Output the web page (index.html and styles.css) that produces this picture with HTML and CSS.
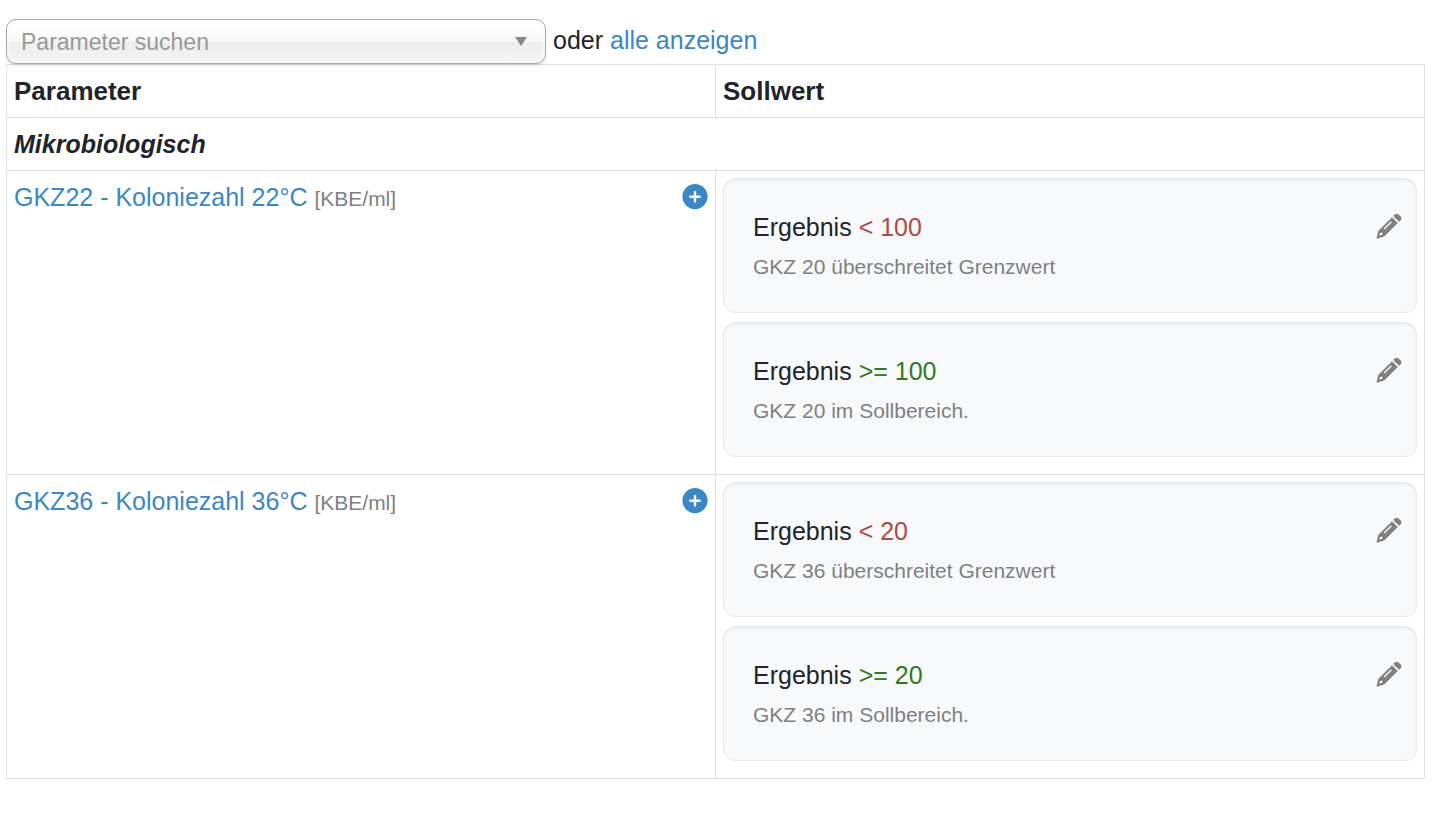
FILE: index.html
```
<!DOCTYPE html>
<html lang="de">
<head>
    <meta charset="UTF-8">
    <meta name="viewport" content="width=device-width, initial-scale=1.0">
    <title>Parameter</title>
    <link rel="stylesheet" href="styles.css">
</head>
<body>
    <svg class="icon-defs" aria-hidden="true">
        <symbol id="icon-plus" viewBox="0 0 26 26">
            <circle cx="13" cy="12.6" r="12.6" fill="currentColor"/>
            <path d="M13 8v9.4M8.3 12.7h9.4" stroke="#fff" stroke-width="2.4" stroke-linecap="round"/>
        </symbol>
        <symbol id="icon-pencil" viewBox="0 0 26 26">
            <path fill="currentColor" fill-rule="evenodd" d="M16 4.2L21.8 10 8.2 23.5 1.6 25.6Q.4 25.9.6 24.6L2.4 17.8zM14.9 8.3L7.6 15.6l1 1 7.3-7.3zM4.3 19.6l-.9 3 3.1-.9-.3-1.8z"/>
            <path fill="currentColor" d="M17.2 3l1.6-1.6q1.8-1.5 3.6 0l2.2 2.2q1.5 1.8 0 3.6L23 8.8z"/>
        </symbol>
    </svg>

    <div class="toolbar">
        <div class="select-wrap">
            <select id="parameterSelect" aria-label="Parameter suchen">
                <option>Parameter suchen</option>
                <option>GKZ22 - Koloniezahl 22°C</option>
                <option>GKZ36 - Koloniezahl 36°C</option>
            </select>
            <span class="arrow"></span>
        </div>
        <span>oder <a href="#alle">alle anzeigen</a></span>
    </div>

    <table class="parameters">
        <thead>
            <tr>
                <th>Parameter</th>
                <th>Sollwert</th>
            </tr>
        </thead>
        <tbody>
            <tr>
                <th class="group" colspan="2">Mikrobiologisch</th>
            </tr>
            <tr>
                <td>
                    <div class="parameter">
                        <span><a href="#gkz22">GKZ22 - Koloniezahl 22°C</a> <small>[KBE/ml]</small></span>
                        <button type="button" class="add" aria-label="Sollwert hinzufügen"><svg><use href="#icon-plus"/></svg></button>
                    </div>
                </td>
                <td>
                    <div class="well">
                        <div>
                            <div>Ergebnis <span class="bad">&lt; 100</span></div>
                            <small>GKZ 20 überschreitet Grenzwert</small>
                        </div>
                        <button type="button" class="edit" aria-label="Bearbeiten"><svg><use href="#icon-pencil"/></svg></button>
                    </div>
                    <div class="well">
                        <div>
                            <div>Ergebnis <span class="good">&gt;= 100</span></div>
                            <small>GKZ 20 im Sollbereich.</small>
                        </div>
                        <button type="button" class="edit" aria-label="Bearbeiten"><svg><use href="#icon-pencil"/></svg></button>
                    </div>
                </td>
            </tr>
            <tr>
                <td>
                    <div class="parameter">
                        <span><a href="#gkz36">GKZ36 - Koloniezahl 36°C</a> <small>[KBE/ml]</small></span>
                        <button type="button" class="add" aria-label="Sollwert hinzufügen"><svg><use href="#icon-plus"/></svg></button>
                    </div>
                </td>
                <td>
                    <div class="well">
                        <div>
                            <div>Ergebnis <span class="bad">&lt; 20</span></div>
                            <small>GKZ 36 überschreitet Grenzwert</small>
                        </div>
                        <button type="button" class="edit" aria-label="Bearbeiten"><svg><use href="#icon-pencil"/></svg></button>
                    </div>
                    <div class="well">
                        <div>
                            <div>Ergebnis <span class="good">&gt;= 20</span></div>
                            <small>GKZ 36 im Sollbereich.</small>
                        </div>
                        <button type="button" class="edit" aria-label="Bearbeiten"><svg><use href="#icon-pencil"/></svg></button>
                    </div>
                </td>
            </tr>
        </tbody>
    </table>
</body>
</html>
```
FILE: styles.css
```
* {
    box-sizing: border-box;
}
body {
    margin: 0;
    padding: 19px 23px 19px 6px;
    background-color: #fff;
    color: #212529;
    font-family: "Helvetica Neue", "Liberation Sans", Arial, sans-serif;
    font-size: 25px;
    line-height: 38px;
}
a {
    color: #3a87c8;
    text-decoration: none;
}
a:hover {
    text-decoration: underline;
}
small {
    color: #808080;
    font-size: 21px;
}
button {
    padding: 0;
    border: none;
    background: none;
    cursor: pointer;
}
svg {
    display: block;
    width: 26px;
    height: 26px;
}
.icon-defs {
    position: absolute;
    width: 0;
    height: 0;
}
.toolbar {
    display: flex;
    align-items: flex-start;
    gap: 7px;
    line-height: 42px;
}
.select-wrap {
    position: relative;
    width: 540px;
}
select {
    display: block;
    width: 100%;
    height: 45px;
    padding: 0 50px 0 14px;
    border: 1px solid #aaa;
    border-radius: 10px;
    background: linear-gradient(#fff 20%, #f6f6f6 50%, #eee 52%, #f4f4f4 100%);
    box-shadow: inset 0 0 6px #fff, 0 2px 2px rgba(0, 0, 0, 0.1);
    color: #999;
    font-family: inherit;
    font-size: 23px;
    appearance: none;
}
.arrow {
    position: absolute;
    top: 18px;
    right: 19px;
    border: 6px solid transparent;
    border-top: 9px solid #888;
    border-bottom: none;
    pointer-events: none;
}
.parameters {
    width: 100%;
    table-layout: fixed;
    border-collapse: collapse;
}
.parameters th,
.parameters td {
    padding: 7px;
    border: 1px solid #dee2e6;
    text-align: left;
    vertical-align: top;
}
.parameters td {
    padding-bottom: 8px;
}
.parameters thead th {
    font-size: 26px;
}
.parameters .group {
    font-style: italic;
}
.parameter {
    display: flex;
    justify-content: space-between;
    align-items: flex-start;
}
.add {
    margin-top: 6px;
    color: #3a87c8;
}
.well {
    display: flex;
    justify-content: space-between;
    align-items: flex-start;
    margin-bottom: 9px;
    padding: 29px 14px 26px 29px;
    border: 1px solid #e9ebee;
    border-radius: 12px;
    background-color: #f8f9fb;
    box-shadow: inset 0 2px 2px rgba(0, 0, 0, 0.05);
}
.well small {
    display: block;
    margin-top: 2px;
}
.edit {
    margin-top: 5px;
    color: #808080;
}
.bad {
    color: #b04a46;
}
.good {
    color: #2e7d1b;
}
```
